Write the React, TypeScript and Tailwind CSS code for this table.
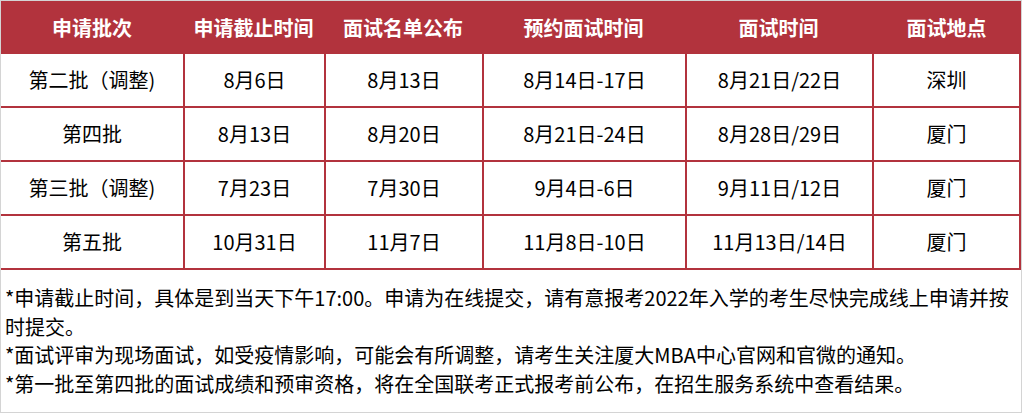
const headers = ["申请批次", "申请截止时间", "面试名单公布", "预约面试时间", "面试时间", "面试地点"];

const rows = [
  ["第二批（调整)", "8月6日", "8月13日", "8月14日-17日", "8月21日/22日", "深圳"],
  ["第四批", "8月13日", "8月20日", "8月21日-24日", "8月28日/29日", "厦门"],
  ["第三批（调整)", "7月23日", "7月30日", "9月4日-6日", "9月11日/12日", "厦门"],
  ["第五批", "10月31日", "11月7日", "11月8日-10日", "11月13日/14日", "厦门"],
];

const cols = "grid grid-cols-[182px_141px_158px_203px_187px_149px]";

export default function App() {
  return (
    <div
      className="w-[1022px] h-[413px] border border-[#d4d4d4] bg-white text-black"
      style={{ fontFamily: '"Noto Sans CJK SC", "Noto Sans", sans-serif' }}
    >
      <div className={`${cols} h-[53px] bg-[#b2333d] text-white text-[20px] font-bold`}>
        {headers.map((h) => (
          <div key={h} className="flex items-center justify-center">
            {h}
          </div>
        ))}
      </div>

      {rows.map((r, i) => (
        <div key={i} className={`${cols} h-[54px] border-b-2 border-[#b2333d] text-[20px]`}>
          {r.map((c, j) => (
            <div
              key={j}
              className={`flex items-center justify-center border-[#b2333d] ${
                j > 0 ? "border-l-2" : ""
              } ${j === 5 ? "border-r-2" : ""}`}
            >
              {c}
            </div>
          ))}
        </div>
      ))}

      <div className="pl-[4px] pt-[14px] text-[20px] leading-[28.5px] whitespace-nowrap">
        <p>*申请截止时间，具体是到当天下午17:00。申请为在线提交，请有意报考2022年入学的考生尽快完成线上申请并按</p>
        <p>时提交。</p>
        <p>*面试评审为现场面试，如受疫情影响，可能会有所调整，请考生关注厦大MBA中心官网和官微的通知。</p>
        <p>*第一批至第四批的面试成绩和预审资格，将在全国联考正式报考前公布，在招生服务系统中查看结果。</p>
      </div>
    </div>
  );
}
